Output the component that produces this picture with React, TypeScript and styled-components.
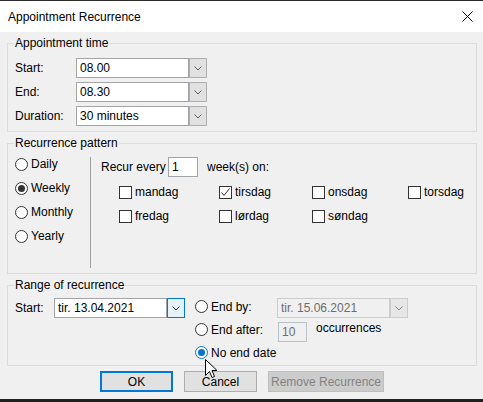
import React from 'react';
import styled, { createGlobalStyle, css } from 'styled-components';

const Global = createGlobalStyle`
  html, body { margin: 0; padding: 0; background: #f0f0f0; }
  body {
    font-family: "Segoe UI", "Liberation Sans", Arial, sans-serif;
    font-size: 12px;
    color: #000;
  }
  * { box-sizing: border-box; }
`;

const Window = styled.div`
  position: relative;
  width: 483px;
  height: 402px;
  border-top: 1px solid #2b2b2b;
  border-bottom: 3px solid #1f1f1f;
  background: #f0f0f0;
  display: flex;
  flex-direction: column;
  overflow: hidden;
`;

const TitleBar = styled.div`
  height: 31px;
  flex: none;
  background: #fff;
  display: flex;
  align-items: center;
  justify-content: space-between;
  padding: 0 10px 0 8px;
`;

const Title = styled.span`
  font-size: 12px;
  line-height: 14px;
`;

const Body = styled.div`
  flex: 1;
  display: flex;
  flex-direction: column;
  padding: 11px 6px 0 7px;
`;

const Group = styled.section<{ $pb: number }>`
  border: 1px solid #dcdcdc;
  padding: 0 7px ${(p) => p.$pb}px 7px;
  & + & { margin-top: 11px; }
`;

const Caption = styled.div<{ $pt: number }>`
  width: fit-content;
  margin: -8px 0 ${(p) => p.$pt}px -1px;
  padding: 0 1px;
  line-height: 14px;
  background: #f0f0f0;
`;

const TimeGrid = styled.div`
  display: grid;
  grid-template-columns: 61px auto;
  grid-auto-rows: 20px;
  row-gap: 4px;
  align-items: center;
`;

const Label = styled.span`
  line-height: 14px;
  white-space: nowrap;
`;

const Combo = styled.div`
  display: flex;
  height: 20px;
`;

const TextBox = styled.div<{ $w: number; $disabled?: boolean }>`
  width: ${(p) => p.$w}px;
  height: 20px;
  background: #fff;
  border: 1px solid #a2a4a8;
  padding: 0 3px;
  display: flex;
  align-items: center;
  line-height: 14px;
  white-space: nowrap;
  ${(p) =>
    p.$disabled &&
    css`
      background: #f0f0f0;
      border-color: #cccccc;
      color: #6d6d6d;
    `}
`;

const DropButton = styled.div<{ $state?: 'normal' | 'hot' | 'disabled' }>`
  width: 18px;
  height: 20px;
  border: 1px solid #adadad;
  background: #e1e1e1;
  display: flex;
  align-items: center;
  justify-content: center;
  color: #606060;
  ${(p) =>
    p.$state === 'hot' &&
    css`
      border-color: #0078d7;
      background: #e5f1fb;
      color: #333;
    `}
  ${(p) =>
    p.$state === 'disabled' &&
    css`
      border-color: #cccccc;
      background: #e6e6e6;
      color: #8a8a8a;
    `}
`;

const Chevron = () => (
  <svg width="8" height="5" viewBox="0 0 8 5">
    <polyline points="0.5,0.5 4,4 7.5,0.5" fill="none" stroke="currentColor" strokeWidth="1" />
  </svg>
);

const PatternInner = styled.div`
  display: flex;
  align-items: flex-start;
`;

const RadioCol = styled.div`
  width: 75px;
  display: flex;
  flex-direction: column;
  gap: 8px;
`;

const RadioItem = styled.div<{ $h?: number }>`
  display: flex;
  align-items: center;
  gap: 3px;
  height: ${(p) => p.$h ?? 16}px;
  line-height: 14px;
  white-space: nowrap;
`;

const RadioCircle = styled.span<{ $checked?: boolean; $hot?: boolean }>`
  width: 13px;
  height: 13px;
  flex: none;
  border-radius: 50%;
  border: 1px solid ${(p) => (p.$hot ? '#0078d7' : '#333')};
  background: #fff;
  display: flex;
  align-items: center;
  justify-content: center;
  &::after {
    content: '';
    display: ${(p) => (p.$checked ? 'block' : 'none')};
    width: 7px;
    height: 7px;
    border-radius: 50%;
    background: ${(p) => (p.$hot ? '#0078d7' : '#333')};
  }
`;

const Pane = styled.div`
  margin-top: 1px;
  height: 111px;
  flex: 1;
  border-left: 1px solid #a0a0a0;
  padding-left: 10px;
`;

const RecurRow = styled.div`
  display: flex;
  align-items: center;
  height: 20px;
`;

const RecurLabel = styled.span`
  width: 67px;
  line-height: 14px;
`;

const AfterLabel = styled.span<{ $ml: number }>`
  margin-left: ${(p) => p.$ml}px;
  line-height: 14px;
  white-space: nowrap;
`;

const DayGrid = styled.div`
  margin: 8px 0 0 18px;
  display: grid;
  grid-template-columns: 100px 93px 96px auto;
  grid-auto-rows: 14px;
  row-gap: 10px;
`;

const CheckItem = styled.div`
  display: flex;
  align-items: center;
  gap: 3px;
  line-height: 14px;
  white-space: nowrap;
`;

const CheckBox = styled.span`
  width: 13px;
  height: 13px;
  flex: none;
  border: 1px solid #333;
  background: #fff;
  display: flex;
  align-items: center;
  justify-content: center;
`;

const RangeInner = styled.div`
  display: flex;
  align-items: flex-start;
`;

const StartLabel = styled.span`
  width: 39px;
  height: 20px;
  display: flex;
  align-items: center;
  line-height: 14px;
`;

const EndGrid = styled.div`
  margin-left: 10px;
  display: grid;
  grid-template-columns: 82px auto;
  grid-template-rows: 23px 23px 16px;
  align-items: start;
`;

const EndRadio = styled(RadioItem)`
  margin-top: 2px;
  height: 13px;
`;

const OccRow = styled.div`
  display: flex;
  align-items: flex-start;
`;

const OccBox = styled(TextBox)`
  margin: 1px 0 0 1px;
  border-color: #b9c3cc;
`;

const ButtonRow = styled.div`
  margin-top: 5px;
  display: flex;
  justify-content: center;
  gap: 11px;
`;

const Button = styled.div<{ $w: number; $variant?: 'default' | 'disabled' }>`
  width: ${(p) => p.$w}px;
  height: 21px;
  border: 1px solid #adadad;
  background: #e1e1e1;
  display: flex;
  align-items: center;
  justify-content: center;
  line-height: 14px;
  ${(p) =>
    p.$variant === 'default' &&
    css`
      border: 2px solid #0078d7;
    `}
  ${(p) =>
    p.$variant === 'disabled' &&
    css`
      background: #cccccc;
      border-color: #bfbfbf;
      color: #838383;
    `}
`;

const Cursor = styled.svg`
  position: absolute;
  left: 205px;
  top: 358px;
`;

const CloseIcon = () => (
  <svg width="11" height="11" viewBox="0 0 11 11">
    <path d="M0.5 0.5 L10.5 10.5 M10.5 0.5 L0.5 10.5" stroke="#000" strokeWidth="1" fill="none" />
  </svg>
);

const Radio = ({ label, checked, hot }: { label: string; checked?: boolean; hot?: boolean }) => (
  <RadioItem>
    <RadioCircle $checked={checked} $hot={hot} />
    <span>{label}</span>
  </RadioItem>
);

const Check = ({ label, checked }: { label: string; checked?: boolean }) => (
  <CheckItem>
    <CheckBox>
      {checked && (
        <svg width="11" height="11" viewBox="0 0 11 11">
          <polyline points="1.5,5.5 4,8.5 9.5,1.5" fill="none" stroke="#333" strokeWidth="1" />
        </svg>
      )}
    </CheckBox>
    <span>{label}</span>
  </CheckItem>
);

const days: { label: string; checked?: boolean }[] = [
  { label: 'mandag' },
  { label: 'tirsdag', checked: true },
  { label: 'onsdag' },
  { label: 'torsdag' },
  { label: 'fredag' },
  { label: 'lørdag' },
  { label: 'søndag' },
];

export default function App() {
  return (
    <>
      <Global />
      <Window>
        <TitleBar>
          <Title>Appointment Recurrence</Title>
          <CloseIcon />
        </TitleBar>
        <Body>
          <Group $pb={5}>
            <Caption $pt={8}>Appointment time</Caption>
            <TimeGrid>
              <Label>Start:</Label>
              <Combo>
                <TextBox $w={113}>08.00</TextBox>
                <DropButton><Chevron /></DropButton>
              </Combo>
              <Label>End:</Label>
              <Combo>
                <TextBox $w={113}>08.30</TextBox>
                <DropButton><Chevron /></DropButton>
              </Combo>
              <Label>Duration:</Label>
              <Combo>
                <TextBox $w={113}>30 minutes</TextBox>
                <DropButton><Chevron /></DropButton>
              </Combo>
            </TimeGrid>
          </Group>

          <Group $pb={5}>
            <Caption $pt={6}>Recurrence pattern</Caption>
            <PatternInner>
              <RadioCol>
                <Radio label="Daily" />
                <Radio label="Weekly" checked />
                <Radio label="Monthly" />
                <Radio label="Yearly" />
              </RadioCol>
              <Pane>
                <RecurRow>
                  <RecurLabel>Recur every</RecurLabel>
                  <TextBox $w={30}>1</TextBox>
                  <AfterLabel $ml={9}>week(s) on:</AfterLabel>
                </RecurRow>
                <DayGrid>
                  {days.map((d) => (
                    <Check key={d.label} label={d.label} checked={d.checked} />
                  ))}
                </DayGrid>
              </Pane>
            </PatternInner>
          </Group>

          <Group $pb={5}>
            <Caption $pt={6}>Range of recurrence</Caption>
            <RangeInner>
              <StartLabel>Start:</StartLabel>
              <Combo>
                <TextBox $w={113}>tir. 13.04.2021</TextBox>
                <DropButton $state="hot"><Chevron /></DropButton>
              </Combo>
              <EndGrid>
                <EndRadio>
                  <RadioCircle />
                  <span>End by:</span>
                </EndRadio>
                <Combo>
                  <TextBox $w={113} $disabled>tir. 15.06.2021</TextBox>
                  <DropButton $state="disabled"><Chevron /></DropButton>
                </Combo>
                <EndRadio>
                  <RadioCircle />
                  <span>End after:</span>
                </EndRadio>
                <OccRow>
                  <OccBox $w={29} $disabled>10</OccBox>
                  <AfterLabel $ml={9}>occurrences</AfterLabel>
                </OccRow>
                <EndRadio>
                  <RadioCircle $checked $hot />
                  <span>No end date</span>
                </EndRadio>
              </EndGrid>
            </RangeInner>
          </Group>

          <ButtonRow>
            <Button $w={73} $variant="default">OK</Button>
            <Button $w={73}>Cancel</Button>
            <Button $w={116} $variant="disabled">Remove Recurrence</Button>
          </ButtonRow>
        </Body>
        <Cursor width="13" height="20" viewBox="0 0 13 20">
          <path d="M0.5 0.5 L0.5 16.5 L4.5 12.5 L7 18.5 L9.5 17.5 L7 11.5 L12 11.5 Z" fill="#fff" stroke="#000" strokeWidth="1" strokeLinejoin="miter" />
        </Cursor>
      </Window>
    </>
  );
}
